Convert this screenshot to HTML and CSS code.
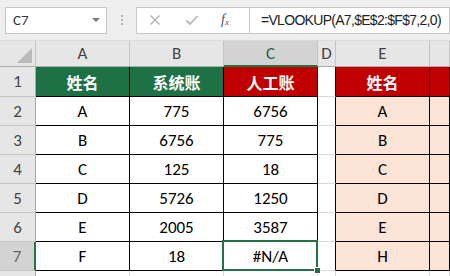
FILE: index.html
```html
<!DOCTYPE html>
<html lang="en">
<head>
<meta charset="UTF-8">
<title>VLOOKUP</title>
<link rel="stylesheet" href="styles.css">
</head>
<body>

<div class="formula-bar">
  <div class="name-box">
    <span>C7</span>
    <i class="drop"></i>
  </div>
  <div class="grip"><b></b><b></b><b></b></div>
  <div class="fx-box">
    <svg class="ico" width="12" height="12" viewBox="0 0 12 12"><path d="M1.5 1.5 L10.5 10.5 M10.5 1.5 L1.5 10.5" stroke="#b8b8b8" stroke-width="1.6" fill="none"/></svg>
    <svg class="ico" width="14" height="12" viewBox="0 0 14 12"><path d="M1.5 6.5 L5 10 L12.5 2" stroke="#b8b8b8" stroke-width="1.8" fill="none"/></svg>
    <span class="fx">f<sub>x</sub></span>
  </div>
  <div class="formula">=VLOOKUP(A7,$E$2:$F$7,2,0)</div>
</div>

<div class="sheet">
  <div class="hd corner"><i></i></div>
  <div class="hd">A</div>
  <div class="hd">B</div>
  <div class="hd hd-sel">C</div>
  <div class="hd">D</div>
  <div class="hd">E</div>
  <div class="hd"></div>

  <div class="rh">1</div>
  <div class="c green">姓名</div>
  <div class="c green">系统账</div>
  <div class="c red">人工账</div>
  <div class="c gap"></div>
  <div class="c red">姓名</div>
  <div class="c red"></div>

  <div class="rh">2</div>
  <div class="c">A</div>
  <div class="c">775</div>
  <div class="c">6756</div>
  <div class="c gap"></div>
  <div class="c pink">A</div>
  <div class="c pink"></div>

  <div class="rh">3</div>
  <div class="c">B</div>
  <div class="c">6756</div>
  <div class="c">775</div>
  <div class="c gap"></div>
  <div class="c pink">B</div>
  <div class="c pink"></div>

  <div class="rh">4</div>
  <div class="c">C</div>
  <div class="c">125</div>
  <div class="c">18</div>
  <div class="c gap"></div>
  <div class="c pink">C</div>
  <div class="c pink"></div>

  <div class="rh">5</div>
  <div class="c">D</div>
  <div class="c">5726</div>
  <div class="c">1250</div>
  <div class="c gap"></div>
  <div class="c pink">D</div>
  <div class="c pink"></div>

  <div class="rh">6</div>
  <div class="c">E</div>
  <div class="c">2005</div>
  <div class="c">3587</div>
  <div class="c gap"></div>
  <div class="c pink">E</div>
  <div class="c pink"></div>

  <div class="rh rh-sel">7</div>
  <div class="c">F</div>
  <div class="c">18</div>
  <div class="c sel">#N/A</div>
  <div class="c gap"></div>
  <div class="c pink">H</div>
  <div class="c pink"></div>

  <div class="rh"></div>
  <div class="c empty"></div>
  <div class="c empty"></div>
  <div class="c empty"></div>
  <div class="c empty"></div>
  <div class="c empty"></div>
  <div class="c empty"></div>
</div>

</body>
</html>
```

FILE: styles.css
```css
body {
  margin: 0;
  width: 450px;
  height: 276px;
  overflow: hidden;
  background: #fff;
  font-family: Carlito, "Liberation Sans", "Noto Sans CJK SC", sans-serif;
  color: #000;
}

/* formula bar */
.formula-bar {
  display: flex;
  align-items: center;
  height: 41px;
  padding-left: 5px;
  background: #eeeeee;
  box-sizing: border-box;
  border-bottom: 1px solid #dadada;
  white-space: nowrap;
}

.name-box {
  display: flex;
  align-items: center;
  justify-content: space-between;
  width: 102px;
  height: 27px;
  box-sizing: border-box;
  padding: 0 6px 0 7px;
  background: #fff;
  border: 1px solid #c6c6c6;
  font-size: 15px;
  color: #333;
}

.drop {
  width: 0;
  height: 0;
  border-left: 4px solid transparent;
  border-right: 4px solid transparent;
  border-top: 4px solid #7a7a7a;
}

.grip {
  display: flex;
  flex-direction: column;
  gap: 2px;
  margin: 0 13px 0 14px;
}

.grip b {
  width: 2px;
  height: 2px;
  background: #b5b5b5;
}

.fx-box {
  display: flex;
  align-items: center;
  width: 113px;
  height: 27px;
  box-sizing: border-box;
  padding-left: 12px;
  gap: 24px;
  background: #fff;
  border: 1px solid #c6c6c6;
  border-right: none;
}

.fx {
  font-family: "Liberation Serif", serif;
  font-style: italic;
  font-size: 14px;
  color: #555;
  margin-left: -2px;
}

.fx sub {
  font-size: 9px;
  vertical-align: -1px;
}

.formula {
  flex: 1;
  height: 27px;
  line-height: 25px;
  box-sizing: border-box;
  padding-left: 11px;
  background: #fff;
  border: 1px solid #c6c6c6;
  font-family: "Liberation Sans", sans-serif;
  font-size: 14px;
  letter-spacing: -0.7px;
  color: #222;
}

/* grid */
.sheet {
  display: grid;
  grid-template-columns: 36px 94px 94px 94px 18px 94px 1fr;
  grid-template-rows: 26px 30px repeat(7, 29px);
}

.sheet > div {
  box-sizing: border-box;
  display: flex;
  align-items: center;
  justify-content: center;
  border-right: 1px solid #000;
  border-bottom: 1px solid #000;
}

.hd, .rh {
  background: #e6e6e6;
  color: #444;
  font-size: 17px;
}

.sheet > .hd {
  border-right: 1px solid #c4c4c4;
  border-bottom: 1px solid #ababab;
}

.sheet > .rh {
  border-right: 1px solid #ababab;
  border-bottom: 1px solid #c4c4c4;
}

.sheet > .corner {
  align-items: flex-end;
  justify-content: flex-end;
  padding: 0 3px 3px 0;
}

.corner i {
  width: 15px;
  height: 15px;
  background: #b9b9b9;
  clip-path: polygon(100% 0, 100% 100%, 0 100%);
}

.sheet > .hd-sel {
  background: #d3d3d3;
  border-bottom: 2px solid #217346;
  color: #2b5a40;
}

.sheet > .rh-sel {
  background: #d3d3d3;
  border-right: 2px solid #217346;
  color: #666;
}

.c {
  font-size: 17px;
}

.green {
  background: #1e7145;
  color: #fff;
  font-family: "Noto Sans CJK SC", sans-serif;
  font-weight: 700;
  font-size: 16px;
}

.red {
  background: #c00000;
  color: #fff;
  font-family: "Noto Sans CJK SC", sans-serif;
  font-weight: 700;
  font-size: 16px;
}

.pink {
  background: #fce4d6;
}

.sheet > .gap {
  border-bottom-color: #d9d9d9;
}

.sheet > .empty {
  border-right-color: #d9d9d9;
  border-bottom-color: #d9d9d9;
}

.sel {
  position: relative;
}

.sel::after {
  content: '';
  position: absolute;
  left: -2px;
  top: -2px;
  right: -1px;
  bottom: -1px;
  border: 2px solid #217346;
}

.sel::before {
  content: '';
  position: absolute;
  right: -4px;
  bottom: -4px;
  width: 5px;
  height: 5px;
  background: #217346;
  border: 1px solid #fff;
  z-index: 1;
}
```
